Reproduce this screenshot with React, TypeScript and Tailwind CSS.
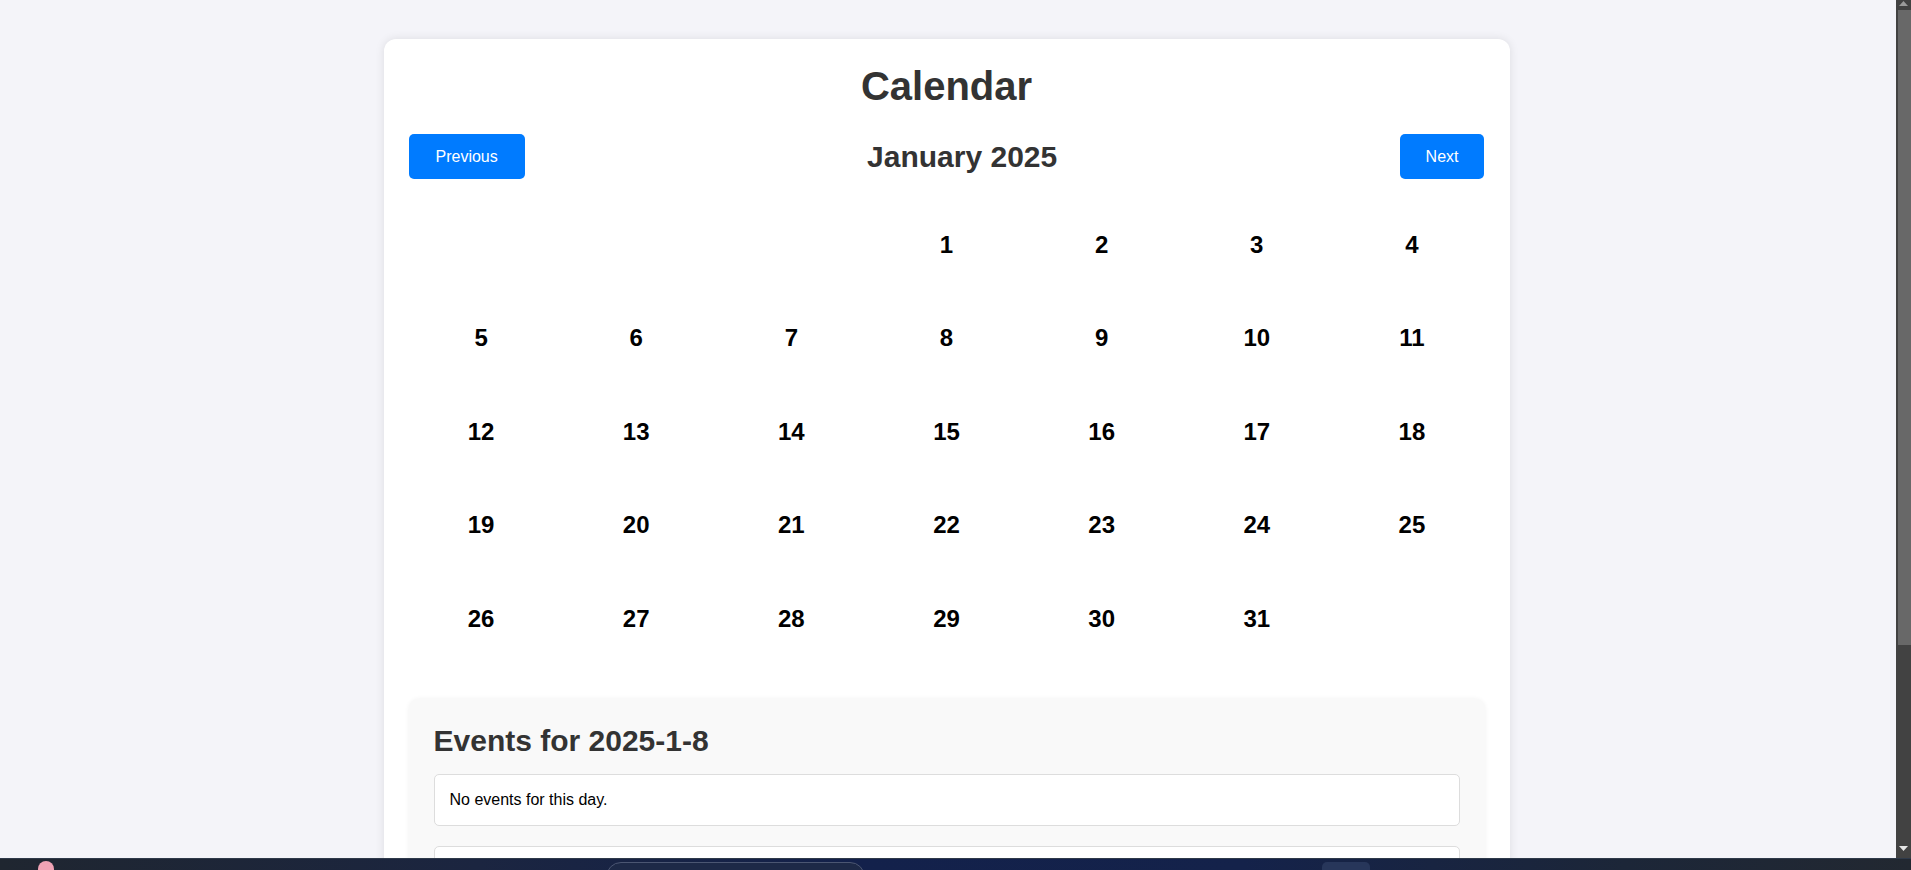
import React from "react";

const weeks: (number | null)[][] = [
  [null, null, null, 1, 2, 3, 4],
  [5, 6, 7, 8, 9, 10, 11],
  [12, 13, 14, 15, 16, 17, 18],
  [19, 20, 21, 22, 23, 24, 25],
  [26, 27, 28, 29, 30, 31, null],
];

function Scrollbar() {
  return (
    <div className="w-[15px] bg-[#424242] flex flex-col items-stretch">
      <div className="h-[10px] flex items-start justify-center">
        <svg width="9" height="5" viewBox="0 0 9 5" className="mt-[1px]">
          <polygon points="4.5,0 9,5 0,5" fill="#9a9a9a" />
        </svg>
      </div>
      <div className="h-[635px] ml-[2px] bg-[#686868]" />
      <div className="flex-1 flex flex-col justify-end items-center pb-[7px]">
        <svg width="9" height="5" viewBox="0 0 9 5">
          <polygon points="0,0 9,0 4.5,5" fill="#e6e6e6" />
        </svg>
      </div>
    </div>
  );
}

function Taskbar() {
  return (
    <div className="h-[12px] shrink-0 overflow-hidden border-t border-[#2f3a4a] bg-[linear-gradient(90deg,#1f2630_0%,#1b2540_25%,#13214b_45%,#14224a_65%,#1c2638_85%,#222831_100%)] flex items-start">
      <div className="ml-[38px] mt-[2px] w-[16px] h-[16px] rounded-full bg-[#f0a3b5] shrink-0" />
      <div className="ml-[552px] mt-[3px] w-[259px] h-[30px] rounded-[15px] border border-[#4b5672] bg-[#1d2947] shrink-0" />
      <div className="ml-[457px] mt-[3px] w-[48px] h-[40px] rounded-[5px] bg-[#27365a] shrink-0" />
    </div>
  );
}

export default function App() {
  return (
    <div
      className="h-screen w-full flex flex-col overflow-hidden"
      style={{ fontFamily: '"Liberation Sans", Arial, sans-serif' }}
    >
      <div className="flex flex-1 min-h-0">
        <main className="flex-1 min-w-0 overflow-hidden bg-[#f4f4f9] pt-[39px] pr-[3px]">
          <div className="w-[1126px] mx-auto bg-white rounded-[12px] shadow-[0_0_10px_rgba(0,0,0,0.1)] px-[25px] pt-[24px] pb-[25px]">
            <h1 className="text-[40px] leading-[46px] font-bold text-[#333] text-center mb-[25px]">
              Calendar
            </h1>
            <div className="flex items-center justify-between h-[45px] mb-[24px]">
              <button className="bg-[#007bff] text-white text-[16px] leading-[18px] px-[27px] py-[13px] rounded-[5px] h-[45px]">
                Previous
              </button>
              <h2 className="text-[30px] leading-[34px] font-bold text-[#333]">January 2025</h2>
              <button className="bg-[#007bff] text-white text-[16px] leading-[18px] px-[26px] py-[13px] rounded-[5px] h-[45px]">
                Next
              </button>
            </div>
            <div className="grid grid-cols-7 gap-[10px]">
              {weeks.flat().map((d, i) => (
                <div
                  key={i}
                  className="h-[83.5px] flex items-center justify-center text-[24px] font-bold text-black"
                >
                  {d ?? ""}
                </div>
              ))}
            </div>
            <div className="mt-[38px] bg-[#f9f9f9] rounded-[10px] shadow-[0_0_5px_rgba(0,0,0,0.06)] p-[25px]">
              <h3 className="text-[30px] leading-[34px] font-bold text-[#333] mb-[16px]">
                Events for 2025-1-8
              </h3>
              <div className="bg-white border border-[#dddddd] rounded-[5px] px-[15px] py-[16px] text-[16px] leading-[18px] text-black">
                No events for this day.
              </div>
              <div className="mt-[20px] bg-white border border-[#dddddd] rounded-[5px] px-[15px] py-[16px] h-[120px]" />
            </div>
          </div>
        </main>
        <Scrollbar />
      </div>
      <Taskbar />
    </div>
  );
}
